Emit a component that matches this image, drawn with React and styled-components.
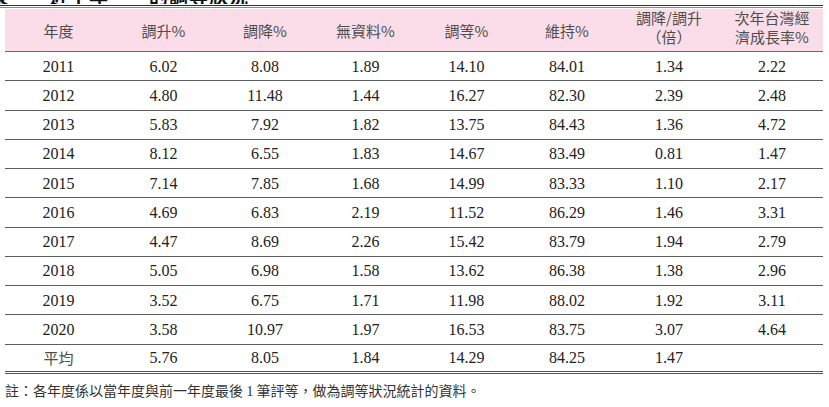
import React from "react";
import styled, { createGlobalStyle } from "styled-components";

const Global = createGlobalStyle`
  html, body { margin: 0; padding: 0; background: #fff; }
  body { width: 829px; height: 407px; overflow: hidden; }
`;

const Page = styled.div`
  width: 829px;
  height: 407px;
  overflow: hidden;
  background: #fff;
`;

const TitleClip = styled.div`
  height: 4px;
  overflow: hidden;
  display: flex;
  align-items: flex-end;
`;

const Title = styled.div`
  flex: none;
  margin-left: -11px;
  font-family: "Noto Sans CJK TC", "Noto Sans", sans-serif;
  font-weight: 700;
  font-size: 19px;
  line-height: 19px;
  letter-spacing: 1px;
  color: #111;
  white-space: pre;
  margin-bottom: -1px;
`;

const TopRule = styled.div`
  width: 823px;
  height: 1px;
  border-top: 1.5px solid #2e2e2e;
  border-bottom: 1px solid #8a8a8a;
  margin-top: 0.5px;
`;

const Table = styled.div`
  margin-left: 5px;
  width: 818px;
  margin-top: 1.5px;
`;

const cols = "107px 103px 100px 101px 101px 100px 104px 102px";

const HeadRow = styled.div`
  display: grid;
  grid-template-columns: ${cols};
  height: 43px;
  box-sizing: border-box;
  background: #fadde8;
  border-bottom: 1.5px solid #75646b;
`;

const HeadCell = styled.div`
  display: flex;
  flex-direction: column;
  align-items: center;
  justify-content: ${(p) => (p.$multi ? "flex-start" : "center")};
  padding-top: ${(p) => (p.$multi ? "0px" : "2px")};
  font-family: "Noto Sans CJK TC", "Noto Sans", sans-serif;
  font-size: 15px;
  line-height: 18.5px;
  color: #4d4d4d;
  white-space: nowrap;
`;

const Row = styled.div`
  display: grid;
  grid-template-columns: ${cols};
  height: 29.27px;
  box-sizing: border-box;
  border-bottom: ${(p) => (p.$last ? "3px double #555" : "1px solid #5e5e5e")};
  align-items: center;
`;

const Cell = styled.div`
  text-align: center;
  font-family: ${(p) =>
    p.$cjk
      ? `"Noto Sans CJK TC", "Noto Sans", sans-serif`
      : `"Liberation Serif", "Times New Roman", serif`};
  font-size: ${(p) => (p.$cjk ? "15px" : "16px")};
  color: ${(p) => (p.$cjk ? "#4d4d4d" : "#222")};
  line-height: 20px;
  padding-top: 1px;
`;

const Note = styled.div`
  margin: 6px 0 0 5px;
  font-family: "Noto Sans CJK TC", "Noto Sans", sans-serif;
  font-size: 14px;
  line-height: 20px;
  color: #333;
  white-space: nowrap;
`;

const NoteNum = styled.span`
  font-family: "Liberation Serif", "Times New Roman", serif;
  font-size: 14.5px;
`;

const headers = [
  ["年度"],
  ["調升%"],
  ["調降%"],
  ["無資料%"],
  ["調等%"],
  ["維持%"],
  ["調降/調升", "（倍）"],
  ["次年台灣經", "濟成長率%"],
];

const rows = [
  ["2011", "6.02", "8.08", "1.89", "14.10", "84.01", "1.34", "2.22"],
  ["2012", "4.80", "11.48", "1.44", "16.27", "82.30", "2.39", "2.48"],
  ["2013", "5.83", "7.92", "1.82", "13.75", "84.43", "1.36", "4.72"],
  ["2014", "8.12", "6.55", "1.83", "14.67", "83.49", "0.81", "1.47"],
  ["2015", "7.14", "7.85", "1.68", "14.99", "83.33", "1.10", "2.17"],
  ["2016", "4.69", "6.83", "2.19", "11.52", "86.29", "1.46", "3.31"],
  ["2017", "4.47", "8.69", "2.26", "15.42", "83.79", "1.94", "2.79"],
  ["2018", "5.05", "6.98", "1.58", "13.62", "86.38", "1.38", "2.96"],
  ["2019", "3.52", "6.75", "1.71", "11.98", "88.02", "1.92", "3.11"],
  ["2020", "3.58", "10.97", "1.97", "16.53", "83.75", "3.07", "4.64"],
  ["平均", "5.76", "8.05", "1.84", "14.29", "84.25", "1.47", ""],
];

export default function App() {
  return (
    <Page>
      <Global />
      <TitleClip>
        <Title>{"表一　近十年　　的調等狀況"}</Title>
      </TitleClip>
      <TopRule />
      <Table>
        <HeadRow>
          {headers.map((h, i) => (
            <HeadCell key={i} $multi={h.length > 1}>
              {h.map((line, j) => (
                <span key={j}>{line}</span>
              ))}
            </HeadCell>
          ))}
        </HeadRow>
        {rows.map((r, i) => (
          <Row key={i} $last={i === rows.length - 1}>
            {r.map((v, j) => (
              <Cell key={j} $cjk={j === 0 && v === "平均"}>
                {v}
              </Cell>
            ))}
          </Row>
        ))}
      </Table>
      <Note>
        註：各年度係以當年度與前一年度最後 <NoteNum>1</NoteNum> 筆評等，做為調等狀況統計的資料。
      </Note>
    </Page>
  );
}
